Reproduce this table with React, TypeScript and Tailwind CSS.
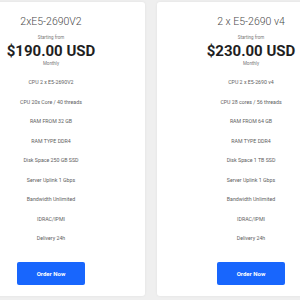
import React from "react";

type Plan = { title: string; price: string; features: string[] };

const plans: Plan[] = [
  {
    title: "2xE5-2690V2",
    price: "$190.00 USD",
    features: [
      "CPU 2 x E5-2690V2",
      "CPU 20x Core / 40 threads",
      "RAM FROM 32 GB",
      "RAM TYPE DDR4",
      "Disk Space 250 GB SSD",
      "Server Uplink 1 Gbps",
      "Bandwidth Unlimited",
      "IDRAC/IPMI",
      "Delivery 24h",
    ],
  },
  {
    title: "2 x E5-2690 v4",
    price: "$230.00 USD",
    features: [
      "CPU 2 x E5-2690 v4",
      "CPU 28 cores / 56 threads",
      "RAM FROM 64 GB",
      "RAM TYPE DDR4",
      "Disk Space 1 TB SSD",
      "Server Uplink 1 Gbps",
      "Bandwidth Unlimited",
      "IDRAC/IPMI",
      "Delivery 24h",
    ],
  },
];

function Card({ plan }: { plan: Plan }) {
  return (
    <div className="flex h-[294px] w-[188px] shrink-0 flex-col items-center rounded-[3px] bg-white shadow-[0_0_3px_rgba(0,0,0,0.06)]">
      <div className="mt-[13px] text-[10.5px] font-light leading-[14px] text-[#4a4a4a]">{plan.title}</div>
      <div className="mt-[6px] text-[4.5px] leading-[6px] text-[#777]">Starting from</div>
      <div className="mt-[2px] text-[15px] font-bold leading-[16px] text-[#1f1f1f]">{plan.price}</div>
      <div className="mt-[2px] text-[4.5px] leading-[6px] text-[#777]">Monthly</div>
      <div className="mt-[12px] flex flex-col items-center gap-[13.5px]">
        {plan.features.map((f) => (
          <div key={f} className="text-[5.25px] leading-[6px] text-[#5e5e5e]">
            {f}
          </div>
        ))}
      </div>
      <button className="mt-[21px] flex h-[23px] w-[68px] items-center justify-center rounded-[2px] bg-[#1866fd] text-[6px] font-bold text-white">
        Order Now
      </button>
    </div>
  );
}

export default function App() {
  return (
    <div
      className="flex h-[300px] w-[300px] justify-center gap-[12px] overflow-hidden bg-[#efefef] pl-[2px] pt-[2px]"
      style={{ fontFamily: "Roboto, 'Noto Sans', sans-serif" }}
    >
      {plans.map((p) => (
        <Card key={p.title} plan={p} />
      ))}
    </div>
  );
}
